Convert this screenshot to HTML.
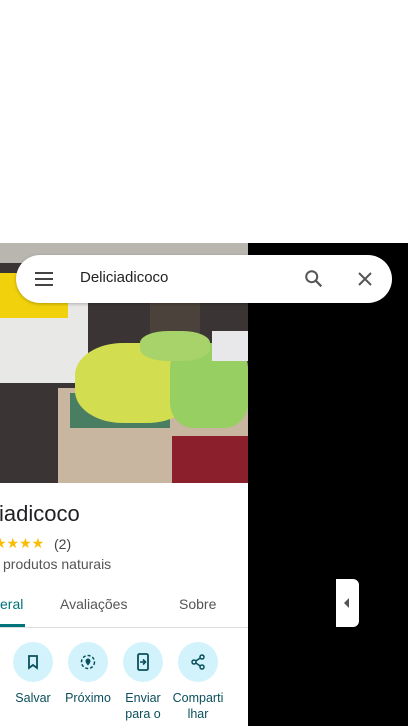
<!DOCTYPE html>
<html><head><meta charset="utf-8"><style>
*{margin:0;padding:0;box-sizing:border-box}
body{width:408px;height:726px;overflow:hidden;background:#fff;font-family:"Liberation Sans",Roboto,sans-serif;position:relative}
.abs{position:absolute}
.black{left:248px;top:243px;width:160px;height:483px;background:#000}
.photo{left:0;top:243px;width:248px;height:240px;overflow:hidden;background:#3a3534}
.lbl{position:absolute;font-size:12.5px;color:#0b4f5c;text-align:center;width:60px;line-height:16px}
.circ{position:absolute;width:40px;height:40px;border-radius:50%;background:#d2f3fb;top:642px}
</style></head><body>
<div class="abs black"></div>
<div class="abs photo">
 <div class="abs" style="left:0;top:0;width:248px;height:20px;background:#b9b6b0"></div>
 <div class="abs" style="left:0;top:55px;width:88px;height:85px;background:#e8e8e6"></div>
 <div class="abs" style="left:0;top:30px;width:68px;height:45px;background:#f0d10c"></div>
 <div class="abs" style="left:150px;top:20px;width:50px;height:80px;background:#4c423c"></div>
 <div class="abs" style="left:58px;top:145px;width:190px;height:95px;background:#c9b6a0"></div>
 <div class="abs" style="left:70px;top:150px;width:100px;height:35px;background:#4a7e63"></div>
 <div class="abs" style="left:172px;top:193px;width:76px;height:47px;background:#8c1f2c"></div>
 <div class="abs" style="left:75px;top:100px;width:120px;height:80px;border-radius:40%;background:#d2dd50"></div>
 <div class="abs" style="left:170px;top:100px;width:78px;height:85px;border-radius:30%;background:#98cf62"></div>
 <div class="abs" style="left:140px;top:88px;width:70px;height:30px;border-radius:40%;background:#a8d36a"></div>
 <div class="abs" style="left:212px;top:88px;width:36px;height:30px;background:#e8e8ea"></div>
</div>
<div class="abs" style="left:16px;top:255px;width:376px;height:48px;border-radius:24px;background:#fff;box-shadow:0 1px 3px rgba(0,0,0,.25)"></div>
<svg class="abs" style="left:33px;top:269px" width="22" height="20" viewBox="0 0 22 20"><path d="M2 4h18M2 10h18M2 16h18" stroke="#444" stroke-width="2"/></svg>
<div class="abs" style="left:80px;top:269px;font-size:15px;color:#222">Deliciadicoco</div>
<svg class="abs" style="left:303px;top:268px" width="22" height="22" viewBox="0 0 24 24"><circle cx="9.5" cy="9.5" r="6" fill="none" stroke="#555" stroke-width="2.2"/><path d="M14 14l6 6" stroke="#555" stroke-width="2.4"/></svg>
<svg class="abs" style="left:356px;top:270px" width="18" height="18" viewBox="0 0 18 18"><path d="M3 3l12 12M15 3L3 15" stroke="#555" stroke-width="2"/></svg>
<div class="abs" style="left:-1px;top:501px;font-size:22px;color:#202124">iadicoco</div>
<div class="abs" style="left:-6px;top:535px;font-size:14px;color:#fbbc04;letter-spacing:0">★★★★</div>
<div class="abs" style="left:54px;top:536px;font-size:14px;color:#444">(2)</div>
<div class="abs" style="left:3px;top:556px;font-size:14px;color:#555">produtos naturais</div>
<div class="abs" style="left:0;top:596px;font-size:14px;color:#00737a">eral</div>
<div class="abs" style="left:60px;top:596px;font-size:14px;color:#555">Avaliações</div>
<div class="abs" style="left:179px;top:596px;font-size:14px;color:#555">Sobre</div>
<div class="abs" style="left:0;top:627px;width:248px;height:1px;background:#ddd"></div>
<div class="abs" style="left:0;top:624px;width:25px;height:3px;background:#00737a"></div>
<div class="circ" style="left:13px"></div><div class="circ" style="left:68px"></div><div class="circ" style="left:123px"></div><div class="circ" style="left:178px"></div>
<svg class="abs" style="left:25px;top:654px" width="16" height="16" viewBox="0 0 16 16"><path d="M4 2h8v12l-4-3-4 3z" fill="none" stroke="#0b4f5c" stroke-width="1.8"/></svg>
<svg class="abs" style="left:80px;top:654px" width="16" height="16" viewBox="0 0 16 16"><circle cx="8" cy="8" r="6.5" fill="none" stroke="#0b4f5c" stroke-width="1.5" stroke-dasharray="3 2"/><path d="M8 4.5a2.5 2.5 0 0 1 2.5 2.5c0 2-2.5 4.5-2.5 4.5S5.5 9 5.5 7A2.5 2.5 0 0 1 8 4.5z" fill="#0b4f5c"/></svg>
<svg class="abs" style="left:135px;top:653px" width="16" height="18" viewBox="0 0 16 18"><rect x="3" y="1" width="10" height="16" rx="1.5" fill="none" stroke="#0b4f5c" stroke-width="1.8"/><path d="M5 9h5M8 6.5L10.5 9 8 11.5" fill="none" stroke="#0b4f5c" stroke-width="1.6"/></svg>
<svg class="abs" style="left:190px;top:654px" width="16" height="16" viewBox="0 0 16 16"><circle cx="12" cy="3" r="2" fill="none" stroke="#0b4f5c" stroke-width="1.5"/><circle cx="4" cy="8" r="2" fill="none" stroke="#0b4f5c" stroke-width="1.5"/><circle cx="12" cy="13" r="2" fill="none" stroke="#0b4f5c" stroke-width="1.5"/><path d="M5.8 7l4.4-3M5.8 9l4.4 3" stroke="#0b4f5c" stroke-width="1.5"/></svg>
<div class="lbl" style="left:3px;top:690px">Salvar</div>
<div class="lbl" style="left:58px;top:690px">Próximo</div>
<div class="lbl" style="left:113px;top:690px">Enviar<br>para o</div>
<div class="lbl" style="left:168px;top:690px">Comparti<br>lhar</div>
<div class="abs" style="left:336px;top:579px;width:23px;height:48px;background:#fff;border-radius:0 6px 6px 0"></div>
<svg class="abs" style="left:343px;top:597px" width="8" height="12" viewBox="0 0 8 12"><path d="M6 1v10L1 6z" fill="#555"/></svg>
</body></html>
